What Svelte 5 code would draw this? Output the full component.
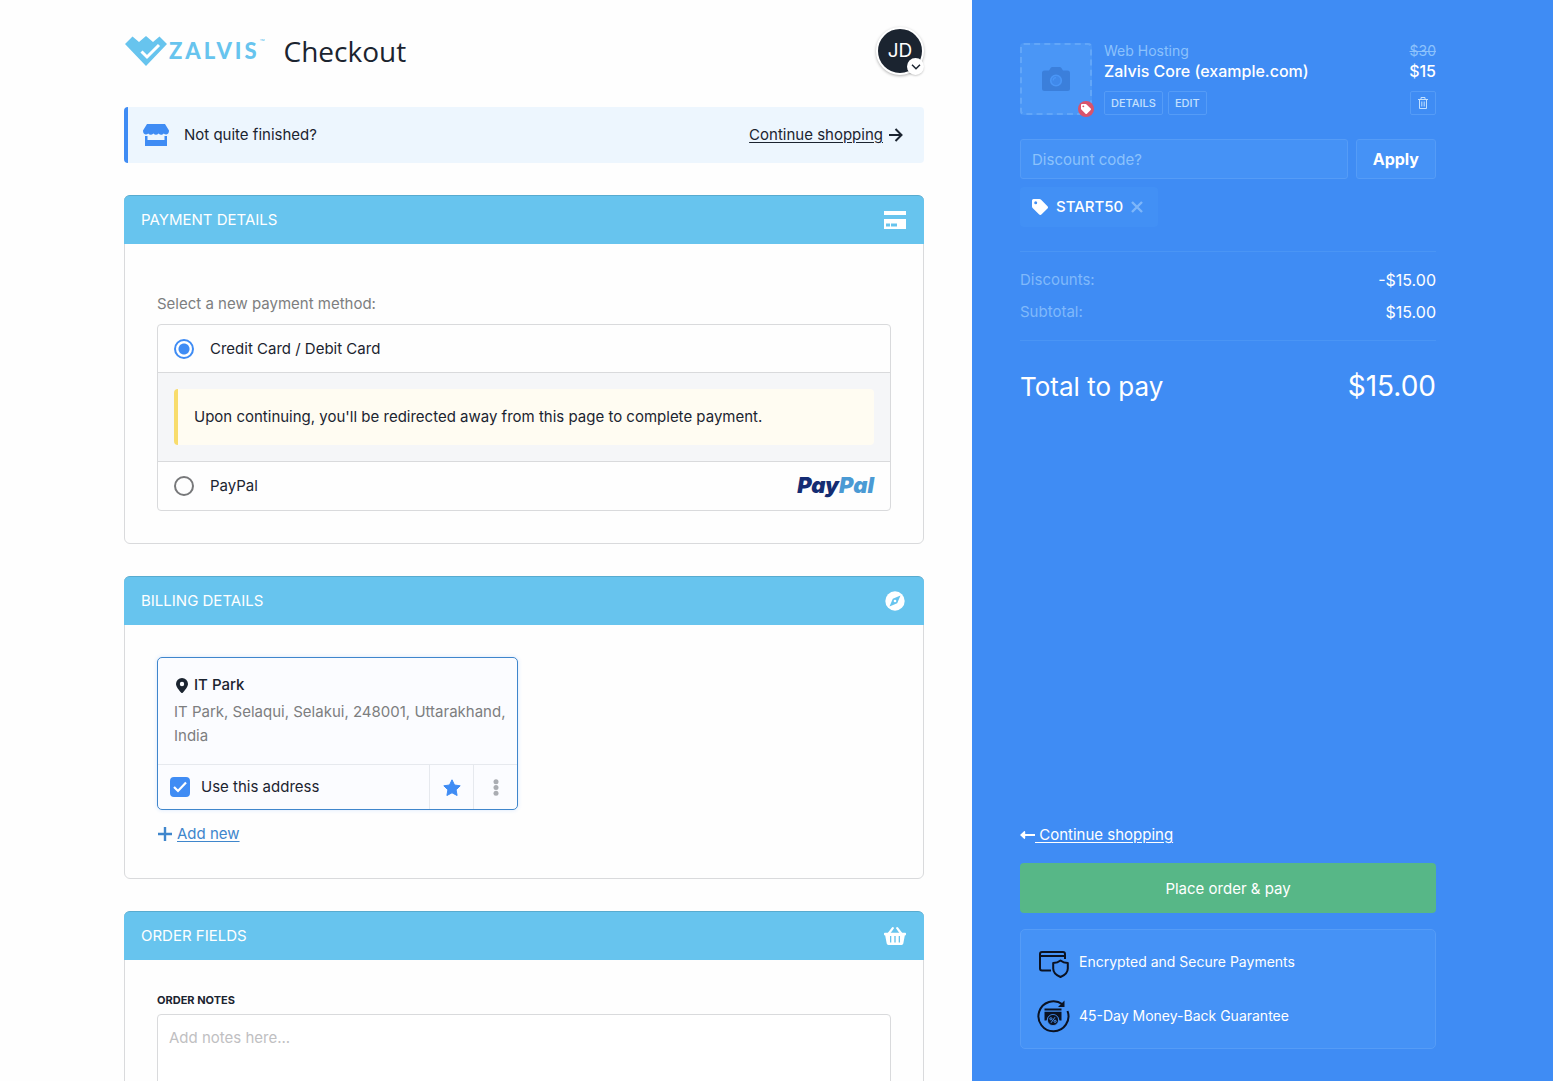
<script>
  let method = $state("card");
  let useAddress = $state(true);
  let code = $state("");
  let notes = $state("");
  let coupons = $state(["START50"]);

  const methods = [
    { id: "card", name: "Credit Card / Debit Card" },
    { id: "paypal", name: "PayPal" },
  ];

  const totals = [
    { label: "Discounts:", value: "-$15.00" },
    { label: "Subtotal:", value: "$15.00" },
  ];

  function applyCode() {
    if (code && !coupons.includes(code)) coupons.push(code);
    code = "";
  }
</script>

{#snippet tag(size)}
  <svg width={size} height={size} viewBox="0 0 16 16" aria-hidden="true">
    <path
      fill="currentColor"
      fill-rule="evenodd"
      d="M0 1.5A1.5 1.5 0 0 1 1.5 0h6a2 2 0 0 1 1.4.6l6.6 6.6a1.6 1.6 0 0 1 0 2.2l-6.1 6.1a1.6 1.6 0 0 1-2.2 0L.6 8.9A2 2 0 0 1 0 7.5zM3.7 2.2a1.5 1.5 0 1 0 0 3 1.5 1.5 0 0 0 0-3z"
    />
  </svg>
{/snippet}

<div class="page">
  <main>
    <div class="content">
      <header>
        <a href="/" class="logo">
          <svg width="42" height="30" viewBox="0 0 42 30" aria-hidden="true">
            <path fill="#67c4ee" d="M0 8 7.500.5 14 6l7-6 7 6L34.500.5 42 8 21 30z" />
            <path
              fill="none"
              stroke="#fff"
              stroke-width="3"
              d="m16.500 15.500 5.500 5.500L34 9"
            />
          </svg>
          <span class="wordmark">ZALVIS</span><span class="tm">™</span>
        </a>
        <h1>Checkout</h1>
        <button class="avatar" aria-label="Account menu">
          JD
          <span class="caret">
            <svg width="10" height="6" viewBox="0 0 10 6">
              <path fill="none" stroke="#1b2430" stroke-width="1.500" d="m1 .8 4 4 4-4" />
            </svg>
          </span>
        </button>
      </header>

      <div class="notice">
        <svg width="26" height="22" viewBox="0 0 26 22" aria-hidden="true">
          <path
            fill="#3f8cf4"
            d="M4 0h18l4 6.500c0 2-.8 3.800-2.600 4-1 .1-2-.3-2.600-1-.8 1-1.700 1.200-2.600 1.200s-1.900-.4-2.600-1.200c-.8.8-1.700 1.200-2.600 1.200s-1.900-.4-2.600-1.200c-.8.8-1.700 1.200-2.600 1.200s-1.900-.4-2.600-1.200c-.7.800-1.600 1.100-2.600 1C.8 10.300 0 8.500 0 6.500z"
          />
          <path fill="#3f8cf4" d="M2 12h2.500v4h17v-4H24v10H2z" />
        </svg>
        <span>Not quite finished?</span>
        <a href="/shop">
          <u>Continue shopping</u>
          <svg width="14" height="14" viewBox="0 0 14 14" aria-hidden="true">
            <path fill="none" stroke="currentColor" stroke-width="2" d="M0 7h12.500M6.500 1l6 6-6 6" />
          </svg>
        </a>
      </div>

      <section class="card">
        <div class="cardHead">
          <h2>Payment Details</h2>
          <svg width="22" height="18" viewBox="0 0 22 18" aria-hidden="true">
            <path
              fill="#fff"
              fill-rule="evenodd"
              d="M0 0h22v4H0zM0 8h22v10H0zM2 12.500v3h4v-3zM7 12.500v3h6v-3z"
            />
          </svg>
        </div>
        <div class="cardBody">
          <p class="hint">Select a new payment method:</p>
          <div class="methods">
            {#each methods as m}
              <label class="method">
                <input type="radio" name="method" value={m.id} bind:group={method} />
                {m.name}
                {#if m.id === "paypal"}
                  <span class="paypal" aria-hidden="true"><b>Pay</b><i>Pal</i></span>
                {/if}
              </label>
              {#if m.id === "card" && method === "card"}
                <div class="panel">
                  <p>
                    Upon continuing, you'll be redirected away from this page to
                    complete payment.
                  </p>
                </div>
              {/if}
            {/each}
          </div>
        </div>
      </section>

      <section class="card">
        <div class="cardHead">
          <h2>Billing Details</h2>
          <svg class="round" width="20" height="20" viewBox="0 0 20 20" aria-hidden="true">
            <circle cx="10" cy="10" r="9.700" fill="#fff" />
            <path fill="#67c4ee" d="m15.500 4.500-3.300 7.700-7.700 3.300 3.300-7.700z" />
            <circle cx="10" cy="10" r="1.300" fill="#fff" />
          </svg>
        </div>
        <div class="cardBody">
          <div class="address">
            <div class="addressText">
              <h3>
                <svg width="12" height="15" viewBox="0 0 12 15" aria-hidden="true">
                  <path
                    fill="currentColor"
                    fill-rule="evenodd"
                    d="M6 0a6 6 0 0 1 6 6c0 2.800-3.500 6.800-5.300 8.700a1 1 0 0 1-1.400 0C3.500 12.800 0 8.800 0 6a6 6 0 0 1 6-6zm0 3.800a2.200 2.200 0 1 0 0 4.400 2.200 2.200 0 0 0 0-4.400z"
                  />
                </svg>
                IT Park
              </h3>
              <p>IT Park, Selaqui, Selakui, 248001, Uttarakhand, India</p>
            </div>
            <div class="addressBar">
              <label>
                <span class="check">
                  <input type="checkbox" bind:checked={useAddress} />
                  <svg width="14" height="12" viewBox="0 0 14 12" aria-hidden="true">
                    <path fill="none" stroke="#fff" stroke-width="2.200" d="m1 6 4 4 8-8.500" />
                  </svg>
                </span>
                Use this address
              </label>
              <button aria-label="Default address">
                <svg width="18" height="17" viewBox="0 0 18 17">
                  <path
                    fill="#3f8cf4"
                    stroke="#3f8cf4"
                    stroke-linejoin="round"
                    d="m9 .8 2.500 5.200 5.700.8-4.100 4 1 5.700L9 13.800l-5.100 2.700 1-5.700-4.100-4 5.700-.8z"
                  />
                </svg>
              </button>
              <button aria-label="Address options">
                <svg width="6" height="17" viewBox="0 0 6 17" fill="#aaadb2">
                  <circle cx="3" cy="2.800" r="2.500" />
                  <circle cx="3" cy="8.500" r="2.500" />
                  <circle cx="3" cy="14.200" r="2.500" />
                </svg>
              </button>
            </div>
          </div>
          <a href="/addresses/new" class="addNew">
            <svg width="14" height="14" viewBox="0 0 14 14" aria-hidden="true">
              <path stroke="currentColor" stroke-width="2.400" d="M7 0v14M0 7h14" />
            </svg>
            <u>Add new</u>
          </a>
        </div>
      </section>

      <section class="card">
        <div class="cardHead">
          <h2>Order Fields</h2>
          <svg width="22" height="18" viewBox="0 0 22 18" aria-hidden="true">
            <path
              fill="none"
              stroke="#fff"
              stroke-width="2.200"
              stroke-linecap="round"
              d="M8.800 1.200 4.800 6.500M13.200 1.200l4 5.300"
            />
            <path
              fill="#fff"
              fill-rule="evenodd"
              d="M.8 5.800h20.400a.8.800 0 0 1 .8.800v1a.8.800 0 0 1-.8.800h-.4l-1.500 8.100a1.800 1.800 0 0 1-1.800 1.500h-13a1.800 1.800 0 0 1-1.800-1.500L1.200 8.400H.8a.8.800 0 0 1-.8-.8v-1a.8.800 0 0 1 .8-.8zM6 9v6.500h1.300V9zM10.300 9v6.500h1.400V9zM14.700 9v6.500H16V9z"
            />
          </svg>
        </div>
        <div class="cardBody">
          <label class="fieldLabel" for="notes">Order notes</label>
          <textarea id="notes" rows="5" placeholder="Add notes here..." bind:value={notes}
          ></textarea>
        </div>
      </section>
    </div>
  </main>

  <aside>
    <div class="summary">
      <div class="item">
        <div class="thumb">
          <svg width="28" height="24" viewBox="0 0 28 24" aria-hidden="true">
            <path
              fill="#3b7fdb"
              d="M2.500 3.500H7L8.800.8A1.800 1.800 0 0 1 10.300 0h7.400a1.800 1.800 0 0 1 1.500.8L21 3.500h4.500A2.500 2.500 0 0 1 28 6v15.500a2.500 2.500 0 0 1-2.500 2.500h-23A2.500 2.500 0 0 1 0 21.500V6a2.500 2.500 0 0 1 2.500-2.500z"
            />
            <circle cx="14" cy="13.500" r="5.300" fill="#4089ea" stroke="#4a96f6" stroke-width="1.600" />
            <path fill="none" stroke="#4a96f6" stroke-width="1.200" d="M11.200 13.500a2.800 2.800 0 0 1 2.800-2.800" />
          </svg>
          <span class="badge">{@render tag(10)}</span>
        </div>
        <div class="itemInfo">
          <div class="line muted"><span>Web Hosting</span><s>$30</s></div>
          <div class="line name"><span>Zalvis Core (example.com)</span><span>$15</span></div>
          <div class="actions">
            <button>Details</button>
            <button>Edit</button>
            <button class="trash" aria-label="Remove">
              <svg width="10" height="12" viewBox="0 0 10 12">
                <path
                  fill="none"
                  stroke="currentColor"
                  d="M0 2.500h10M3 2.500v-2h4v2M1.500 2.500v9h7v-9M3.800 4.500v5M6.200 4.500v5"
                />
              </svg>
            </button>
          </div>
        </div>
      </div>

      <div class="discount">
        <input type="text" aria-label="Discount code" placeholder="Discount code?" bind:value={code} />
        <button onclick={applyCode}>Apply</button>
      </div>
      <div class="coupons">
        {#each coupons as c}
          <span class="coupon">
            {@render tag(16)}
            {c}
            <button aria-label="Remove {c}" onclick={() => (coupons = coupons.filter((x) => x !== c))}>
              <svg width="12" height="12" viewBox="0 0 12 12">
                <path stroke="currentColor" stroke-width="2.400" d="m1 1 10 10M11 1 1 11" />
              </svg>
            </button>
          </span>
        {/each}
      </div>

      <dl>
        {#each totals as t}
          <div>
            <dt>{t.label}</dt>
            <dd>{t.value}</dd>
          </div>
        {/each}
      </dl>

      <div class="total"><span>Total to pay</span><strong>$15.00</strong></div>

      <div class="bottom">
        <a href="/shop" class="back">
          <svg width="15" height="8" viewBox="0 0 15 8" aria-hidden="true">
            <path fill="currentColor" d="M0 4 4 .3a.8.800 0 0 1 1.200.6V3H15v2H5.200v2.100a.8.800 0 0 1-1.200.6z" />
          </svg>
          <u>&nbsp;Continue shopping</u>
        </a>
        <button class="pay">Place order &amp; pay</button>
        <ul>
          <li>
            <svg width="34" height="34" viewBox="-1 -1 34 34" fill="none" stroke="#0b1222" aria-hidden="true">
              <path stroke-width="2" d="M14 24.500H5a2 2 0 0 1-2-2V8a2 2 0 0 1 2-2h21a2 2 0 0 1 2 2v5M3 10h25" />
              <path
                stroke-width="2"
                stroke-linejoin="round"
                d="M23.500 14.500c2 1.600 4.500 2.400 7.300 2.600v5.400c0 4-3.300 6.900-7.300 8.500-4-1.600-7.300-4.500-7.300-8.500v-5.400c2.800-.2 5.300-1 7.300-2.600z"
              />
            </svg>
            Encrypted and Secure Payments
          </li>
          <li>
            <svg width="34" height="34" viewBox="0 0 34 34" fill="none" stroke="#0b1222" aria-hidden="true">
              <path stroke-width="2" d="M26.500 5.300A15 15 0 1 0 31.500 12" />
              <path fill="#0b1222" stroke="none" d="M28.500 1.500V8H22z" />
              <path stroke-width="2" d="M8.500 10.500h17" />
              <path fill="#0b1222" stroke="none" d="M8.500 12.800h17v8.700h-2a6.600 6.600 0 0 0-13 0h-2z" />
              <circle cx="17" cy="21" r="5.600" fill="#0b1222" stroke="#4592f6" stroke-width=".8" />
              <path
                stroke="#4592f6"
                d="m15 23.800 4-5.600M13.800 19.800a1.100 1.100 0 1 0 2.200 0 1.100 1.100 0 0 0-2.200 0M18 22.300a1.100 1.100 0 1 0 2.200 0 1.100 1.100 0 0 0-2.200 0"
              />
            </svg>
            45-Day Money-Back Guarantee
          </li>
        </ul>
      </div>
    </div>
  </aside>
</div>

<style>
  .page {
    display: grid;
    grid-template-columns: minmax(0, 972fr) minmax(0, 581fr);
    height: 100vh;
    background: #fefefe;
    color: #1b2430;
    font: 400 15px/24px Inter, sans-serif;
  }
  .page * {
    box-sizing: border-box;
  }
  h1,
  h2,
  h3,
  p,
  ul,
  dl,
  dd {
    margin: 0;
    padding: 0;
  }
  svg {
    display: block;
    flex: none;
  }
  button,
  input,
  textarea {
    font: inherit;
    color: inherit;
  }
  button {
    padding: 0;
    border: 0;
    background: none;
    cursor: pointer;
  }
  a {
    color: inherit;
    text-decoration: none;
  }
  u {
    text-underline-offset: 2px;
  }

  main {
    overflow-y: auto;
    scrollbar-width: none;
  }
  .content {
    display: flex;
    flex-direction: column;
    gap: 32px;
    max-width: 848px;
    margin-left: auto;
    padding: 27px 48px 32px 0;
  }
  header {
    display: flex;
    align-items: center;
    height: 48px;
  }
  .logo {
    display: flex;
    align-items: center;
    color: #67c4ee;
    padding-left: 1px;
  }
  .wordmark {
    margin-left: 2px;
    font: 900 22px/24px Lato, sans-serif;
    letter-spacing: 3px;
  }
  .tm {
    align-self: flex-start;
    font-size: 8px;
    line-height: 12px;
  }
  h1 {
    margin-left: 19px;
    font: 400 28px/38px "Open Sans", sans-serif;
  }
  .avatar {
    position: relative;
    width: 48px;
    height: 48px;
    margin-left: auto;
    border: 2px solid #fff;
    border-radius: 50%;
    background: #1b2430;
    color: #fff;
    font-size: 19px;
    box-shadow: 0 1px 3px rgba(0, 0, 0, 0.3);
  }
  .caret {
    position: absolute;
    right: -2px;
    bottom: -2px;
    display: grid;
    place-items: center;
    width: 17px;
    height: 17px;
    border-radius: 50%;
    background: #fff;
    box-shadow: 0 1px 2px rgba(0, 0, 0, 0.2);
  }

  .notice {
    display: flex;
    align-items: center;
    height: 56px;
    padding: 0 21px 0 15px;
    gap: 15px;
    border-left: 4px solid #3f8cf4;
    border-radius: 4px;
    background: #edf6fe;
  }
  .notice a {
    display: flex;
    align-items: center;
    gap: 6px;
    margin-left: auto;
  }

  .card {
    border: 1px solid #d9dadc;
    border-radius: 6px;
  }
  .cardHead {
    display: flex;
    align-items: center;
    justify-content: space-between;
    height: 49px;
    margin: -1px -1px 0;
    padding: 0 18px 0 17px;
    border-top: 1px solid #58abcf;
    border-radius: 6px 6px 0 0;
    background: #67c4ee;
    color: #fff;
  }
  .round {
    margin-right: 1px;
  }
  h2 {
    font-size: 15px;
    font-weight: 400;
    line-height: 24px;
    text-transform: uppercase;
  }
  .cardBody {
    padding: 32px;
  }
  .hint {
    padding: 16px 0 8px;
    color: #7d7e80;
  }
  .methods {
    border: 1px solid #d9dadc;
    border-radius: 4px;
  }
  .method {
    display: flex;
    align-items: center;
    gap: 16px;
    height: 48px;
    padding: 0 16px;
  }
  .method input {
    appearance: none;
    width: 20px;
    height: 20px;
    margin: 0;
    border: 2px solid #77787a;
    border-radius: 50%;
  }
  .method input:checked {
    border-color: #3f8cf4;
    background: radial-gradient(#3f8cf4 5px, #fff 6px);
  }
  .panel {
    margin-top: -1px;
    padding: 16px;
    border: solid #d9dadc;
    border-width: 1px 0;
    background: #f5f6f8;
  }
  .panel p {
    padding: 16px;
    border-left: 4px solid #f8dc6c;
    border-radius: 4px;
    background: #fffcf2;
  }
  .paypal {
    margin-left: auto;
    padding-bottom: 2px;
    font: italic 900 22px/28px Inter, sans-serif;
    font-feature-settings: "cv11";
    color: #142c73;
  }
  .paypal b,
  .paypal i {
    font-weight: 900;
  }
  .paypal i {
    color: #4a9ad4;
  }

  .address {
    max-width: 361px;
    border: 1px solid #3f86cc;
    border-radius: 5px;
    background: #fbfcff;
    box-shadow: 0 0 4px rgba(63, 140, 244, 0.2);
  }
  .addressText {
    padding: 15px 8px 16px 16px;
  }
  h3 {
    display: flex;
    align-items: center;
    gap: 6px;
    padding: 0 0 3px 2px;
    font-size: 15px;
    font-weight: 500;
    line-height: 24px;
  }
  .addressText p {
    color: #7d7e80;
  }
  .addressBar {
    display: flex;
    height: 45px;
    border-top: 1px solid #e6e9ee;
  }
  .addressBar label {
    display: flex;
    flex: 1;
    align-items: center;
    gap: 11px;
    padding-left: 12px;
  }
  .addressBar button {
    display: grid;
    place-items: center;
    width: 44px;
    border-left: 1px solid #e6e9ee;
  }
  .check {
    position: relative;
    display: grid;
    place-items: center;
  }
  .check input {
    grid-area: 1 / 1;
    appearance: none;
    width: 20px;
    height: 20px;
    margin: 0;
    border: 2px solid #77787a;
    border-radius: 4px;
  }
  .check input:checked {
    border-color: #3f8cf4;
    background: #3f8cf4;
  }
  .check svg {
    grid-area: 1 / 1;
    z-index: 1;
    pointer-events: none;
  }
  .addNew {
    display: flex;
    align-items: center;
    gap: 5px;
    width: max-content;
    margin-top: 12px;
    padding-left: 1px;
    color: #3f86cc;
  }

  .fieldLabel {
    display: block;
    margin-bottom: 6px;
    font-size: 11px;
    font-weight: 700;
    line-height: 16px;
    text-transform: uppercase;
  }
  textarea {
    display: block;
    width: 100%;
    padding: 11px;
    border: 1px solid #d9dadc;
    border-radius: 4px;
    background: #fff;
  }
  textarea::placeholder {
    color: #bfc0c2;
  }

  aside {
    overflow-y: auto;
    scrollbar-width: none;
    background: #3f8cf4;
    color: #fff;
  }
  .summary {
    display: flex;
    flex-direction: column;
    max-width: 464px;
    min-height: 100%;
    padding: 43px 0 32px 48px;
  }
  .item {
    display: flex;
    gap: 12px;
  }
  .thumb {
    position: relative;
    display: grid;
    flex: none;
    place-items: center;
    width: 72px;
    height: 72px;
    border: 2px dashed #62a6f8;
    border-radius: 4px;
    background: #4a96f6;
  }
  .badge {
    position: absolute;
    right: -4px;
    bottom: -4px;
    display: grid;
    place-items: center;
    width: 16px;
    height: 16px;
    border-radius: 50%;
    background: #d9536b;
  }
  .itemInfo {
    flex: 1;
  }
  .line {
    display: flex;
    justify-content: space-between;
    line-height: 20px;
  }
  .muted {
    margin-top: -2px;
    color: #8cc2fc;
    font-size: 14px;
  }
  .name {
    font-size: 16px;
    font-weight: 500;
  }
  .actions {
    display: flex;
    gap: 5px;
    margin-top: 10px;
  }
  .actions button {
    height: 24px;
    padding: 0 6px;
    border: 1px solid #559cf7;
    border-radius: 2px;
    color: #c3e0fe;
    font-size: 11px;
    font-weight: 500;
    line-height: 22px;
    text-transform: uppercase;
  }
  .actions .trash {
    display: grid;
    place-items: center;
    width: 26px;
    margin-left: auto;
  }
  .discount {
    display: flex;
    gap: 8px;
    margin: 24px 0 8px;
  }
  .discount input,
  .discount button {
    height: 40px;
    border: 1px solid #559cf7;
    border-radius: 3px;
    background: #4592f6;
  }
  .discount input {
    flex: 1;
    min-width: 0;
    padding: 0 11px;
  }
  .discount input::placeholder {
    color: #8cc2fc;
  }
  .discount button {
    padding: 0 16px;
    font-size: 16px;
    font-weight: 700;
  }
  .coupons {
    display: flex;
    flex-wrap: wrap;
    gap: 8px;
  }
  .coupon {
    display: flex;
    align-items: center;
    gap: 8px;
    height: 40px;
    padding: 0 15px 0 12px;
    border-radius: 4px;
    background: #4290f5;
    font-weight: 500;
  }
  .coupon button {
    color: #7db6fa;
  }
  dl {
    margin: 24px 0;
    padding: 12px 0;
    border: solid #4a95f5;
    border-width: 1px 0;
  }
  dl div {
    display: flex;
    align-items: center;
    justify-content: space-between;
    height: 32px;
  }
  dt {
    color: #80b9fb;
  }
  dd {
    font-size: 16px;
  }
  .total {
    display: flex;
    align-items: baseline;
    justify-content: space-between;
    font-size: 26px;
    line-height: 42px;
  }
  .total strong {
    font-size: 28px;
    font-weight: 400;
  }
  .bottom {
    margin-top: auto;
    padding-top: 32px;
  }
  .back {
    display: flex;
    align-items: center;
    width: max-content;
  }
  .pay {
    display: block;
    width: 100%;
    height: 50px;
    margin: 16px 0;
    padding-top: 2px;
    border-radius: 4px;
    background: #57b787;
  }
  ul {
    display: flex;
    flex-direction: column;
    gap: 20px;
    padding: 15px;
    border: 1px solid #559cf7;
    border-radius: 5px;
    background: #4592f6;
    font-size: 14px;
    list-style: none;
  }
  li {
    display: flex;
    align-items: center;
    gap: 9px;
  }
</style>
